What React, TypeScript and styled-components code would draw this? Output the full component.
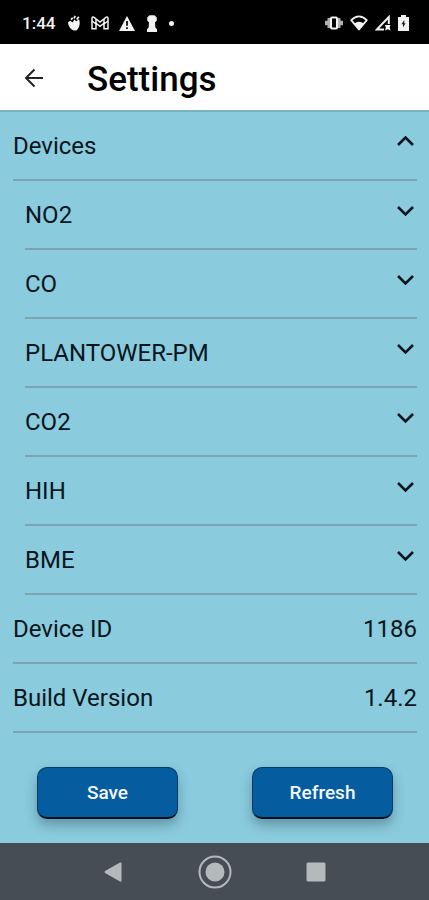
import React, { useState } from "react";
import styled, { createGlobalStyle } from "styled-components";

const GlobalStyle = createGlobalStyle`
  *, *::before, *::after { box-sizing: border-box; }
  body { margin: 0; background: #8acbde; font-family: Roboto, "Open Sans", sans-serif; color: #07161c; }
  button { font: inherit; color: inherit; padding: 0; border: 0; background: none; cursor: pointer; }
`;

const Screen = styled.div`
  min-height: 100vh;
  display: flex;
  flex-direction: column;
  background: #8acbde;
`;

const StatusBar = styled.div`
  height: 44px;
  display: flex;
  align-items: center;
  justify-content: space-between;
  padding: 2px 20px 0 22px;
  background: #000;
  color: #f2f2f2;
`;

const StatusGroup = styled.div<{ $gap: number }>`
  display: flex;
  align-items: center;
  gap: ${(p) => p.$gap}px;
  svg { display: block; }
`;

const Clock = styled.time`
  font-size: 17px;
  line-height: 20px;
  font-weight: 500;
  margin-right: 2px;
`;

const Header = styled.header`
  height: 68px;
  display: flex;
  align-items: center;
  gap: 43px;
  padding: 2px 24px 0;
  background: #fff;
  border-bottom: 2px solid #7bb0be;
`;

const BackButton = styled.button`
  display: flex;
  color: #222;
`;

const Title = styled.h1`
  margin: 0;
  padding-top: 4px;
  font-size: 35px;
  line-height: 40px;
  font-weight: 500;
  color: #000;
`;

const List = styled.main`
  flex: 1;
  padding: 0 12px 0 13px;
`;

const Nested = styled.div`
  padding-left: 12px;
`;

const rowStyles = `
  width: 100%;
  height: 69px;
  display: flex;
  align-items: center;
  justify-content: space-between;
  border-bottom: 2px solid #7ea3ae;
  font-size: 24px;
  line-height: 28px;
  font-weight: 400;
  text-align: left;
`;

const ToggleRow = styled.button`
  && { ${rowStyles} }
`;

const InfoRow = styled.div`
  ${rowStyles}
`;

const ChevronIcon = styled.svg`
  margin: 0 2px 8px 0;
`;

const Actions = styled.div`
  display: flex;
  justify-content: space-between;
  padding: 34px 24px 24px;
`;

const ActionButton = styled.button`
  && {
    width: 141px;
    height: 52px;
    border: 1px solid #033a66;
    border-bottom: 2px solid #02101f;
    border-radius: 10px;
    background: #055c9f;
    color: #f4f8ff;
    font-size: 19px;
    line-height: 24px;
    font-weight: 500;
    box-shadow: 0 6px 12px rgba(40, 70, 85, 0.4);
  }
`;

const NavBar = styled.nav`
  height: 57px;
  display: flex;
  align-items: center;
  justify-content: center;
  gap: 67px;
  background: #464e54;
  color: #b4babb;
`;

const NavButton = styled.button`
  width: 34px;
  height: 34px;
  display: flex;
  align-items: center;
  justify-content: center;
`;

function Chevron({ up }: { up: boolean }) {
  return (
    <ChevronIcon width="18" height="12" viewBox="0 0 18 12" fill="none" stroke="#07161c" strokeWidth="2.6" aria-hidden="true">
      <path d={up ? "M1 9 8.5 1.5 16 9" : "M1 2 8.5 9.5 16 2"} />
    </ChevronIcon>
  );
}

function ExpandRow({ label, open, onToggle }: { label: string; open: boolean; onToggle: () => void }) {
  return (
    <ToggleRow type="button" aria-expanded={open} onClick={onToggle}>
      <span>{label}</span>
      <Chevron up={open} />
    </ToggleRow>
  );
}

const sensors = ["NO2", "CO", "PLANTOWER-PM", "CO2", "HIH", "BME"];

export default function App() {
  const [devicesOpen, setDevicesOpen] = useState(true);
  const [openSensor, setOpenSensor] = useState<string | null>(null);

  return (
    <Screen>
      <GlobalStyle />
      <StatusBar>
        <StatusGroup $gap={10}>
          <Clock>1:44</Clock>
          <svg width="14" height="16" viewBox="0 0 14 16" fill="currentColor" aria-hidden="true">
            <path d="M1 7.3 3.3 5.8 5.5 7.4 7.5 4.6 9.2 6.3 12 4.3C13.6 8 12.6 13 9.3 15.5 5.5 16.3 1.3 12.5 1 7.3Z" />
            <path d="M4 4.6 5.7 2.7M7.1 3.3 8.2.8M9.8 4.6 11.8 1.7" stroke="currentColor" strokeWidth="1.7" fill="none" />
          </svg>
          <svg width="18" height="14" viewBox="0 0 18 14" fill="none" stroke="currentColor" strokeWidth="1.5" aria-hidden="true">
            <path d="M1 12.8V2.2Q1 .5 3 1.3L9 6 15 1.3Q17 .5 17 2.2V12.8H13V7.2L9 10.3 5 7.2V12.8Z" />
            <path d="M5 7.2V3M13 7.2V3M1 5 5 8M17 5 13 8" />
          </svg>
          <svg width="16" height="15" viewBox="0 0 16 15" aria-hidden="true">
            <path d="M8 0 16 15H0Z" fill="currentColor" />
            <path d="M8 5V9.7M8 11.2V13" stroke="#000" strokeWidth="1.7" />
          </svg>
          <svg width="14" height="17" viewBox="1 0 14 17" fill="currentColor" aria-hidden="true">
            <path d="M5.5.3H10.5L12.8 2.5V5.5L11 7.6 11.3 12.5 13 14.3V17H3V14.3L4.7 12.5 5 7.6 3.2 5.5V2.5Z" />
          </svg>
          <svg width="5" height="5" viewBox="0 0 5 5" fill="currentColor" aria-hidden="true">
            <circle cx="2.5" cy="2.5" r="2.5" />
          </svg>
        </StatusGroup>
        <StatusGroup $gap={7}>
          <svg width="18" height="14" viewBox="0 0 18 14" aria-hidden="true">
            <path d="M2.5 2H15.5V12H2.5ZM0 4.8H18V9.2H0Z" fill="#b0b0b0" />
            <rect x="6" y="1.5" width="6" height="11" rx="1" fill="#000" stroke="currentColor" strokeWidth="2" />
          </svg>
          <svg width="18" height="16" viewBox="0 0 18 16" aria-hidden="true">
            <path d="M1.2 5.2Q9-2.5 16.8 5.2L9 14.5Z" fill="none" stroke="currentColor" strokeWidth="1.8" strokeLinejoin="round" />
            <path d="M4 8.7Q9 5 14 8.7L9 14.8Z" fill="currentColor" />
          </svg>
          <svg width="16" height="16" viewBox="0 0 16 16" aria-hidden="true">
            <path d="M9 14.5H1.8L13.8 2V9" fill="none" stroke="currentColor" strokeWidth="2" />
            <path d="M10 10H15.5L14.7 12.4 15.5 15.5 12.8 14.2 10 15.5 10.8 12.6Z" fill="currentColor" />
          </svg>
          <svg width="11" height="16" viewBox="0 0 11 16" aria-hidden="true">
            <path d="M0 2H3V0H8V2H11V16H0Z" fill="currentColor" />
            <path d="M6.3 5 3.4 9.3H5V12.5L7.6 8.2H6.3Z" fill="#222" />
          </svg>
        </StatusGroup>
      </StatusBar>
      <Header>
        <BackButton type="button" aria-label="Back">
          <svg width="20" height="20" viewBox="0 0 20 20" fill="none" stroke="currentColor" strokeWidth="2" aria-hidden="true">
            <path d="M10.5 1.5 2 10 10.5 18.5M2 10H19" />
          </svg>
        </BackButton>
        <Title>Settings</Title>
      </Header>
      <List>
        <ExpandRow label="Devices" open={devicesOpen} onToggle={() => setDevicesOpen(!devicesOpen)} />
        {devicesOpen && (
          <Nested>
            {sensors.map((name) => (
              <ExpandRow
                key={name}
                label={name}
                open={openSensor === name}
                onToggle={() => setOpenSensor(openSensor === name ? null : name)}
              />
            ))}
          </Nested>
        )}
        <InfoRow>
          <span>Device ID</span>
          <span>1186</span>
        </InfoRow>
        <InfoRow>
          <span>Build Version</span>
          <span>1.4.2</span>
        </InfoRow>
        <Actions>
          <ActionButton type="button">Save</ActionButton>
          <ActionButton type="button">Refresh</ActionButton>
        </Actions>
      </List>
      <NavBar aria-label="System">
        <NavButton type="button" aria-label="Go back">
          <svg width="20" height="20" viewBox="0 0 20 20" fill="currentColor" aria-hidden="true">
            <path d="M16 .5Q17.5 0 17.5 1.5V18.5Q17.5 20 16 19.5L1 11Q0 10 1 9Z" />
          </svg>
        </NavButton>
        <NavButton type="button" aria-label="Home">
          <svg width="34" height="34" viewBox="0 0 34 34" aria-hidden="true">
            <circle cx="17" cy="17" r="15.5" fill="none" stroke="currentColor" strokeWidth="2" />
            <circle cx="17" cy="17" r="9.5" fill="currentColor" />
          </svg>
        </NavButton>
        <NavButton type="button" aria-label="Recent apps">
          <svg width="20" height="20" viewBox="0 0 20 20" aria-hidden="true">
            <rect x="0.5" y="0.5" width="19" height="19" rx="1.5" fill="currentColor" />
          </svg>
        </NavButton>
      </NavBar>
    </Screen>
  );
}
